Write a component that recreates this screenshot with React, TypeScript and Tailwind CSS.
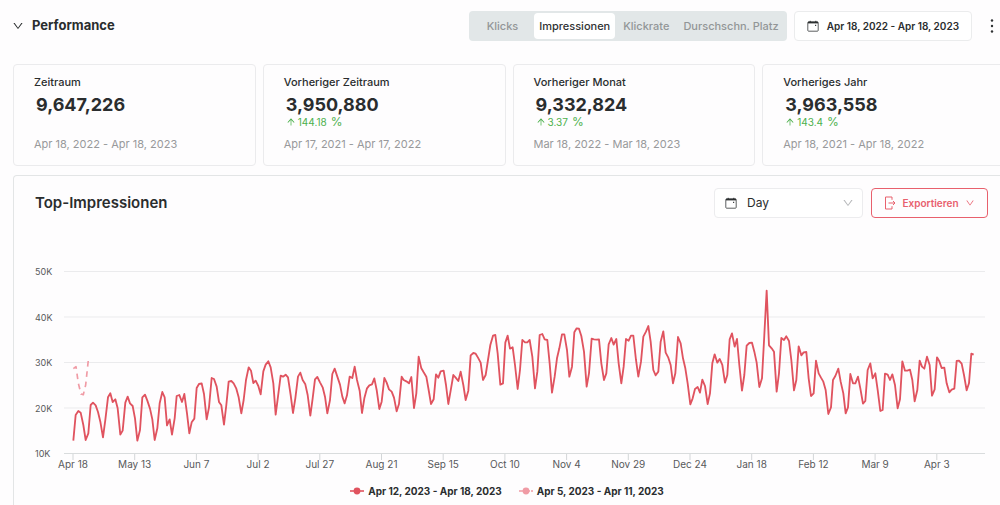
import { AiOutlineArrowUp, AiOutlineDown } from "react-icons/ai";

const TABS = ["Klicks", "Impressionen", "Klickrate", "Durschschn. Platz"];

const CARDS = [
  { title: "Zeitraum", value: "9,647,226", change: null, range: "Apr 18, 2022 - Apr 18, 2023" },
  { title: "Vorheriger Zeitraum", value: "3,950,880", change: "144.18", range: "Apr 17, 2021 - Apr 17, 2022" },
  { title: "Vorheriger Monat", value: "9,332,824", change: "3.37", range: "Mar 18, 2022 - Mar 18, 2023" },
  { title: "Vorheriges Jahr", value: "3,963,558", change: "143.4", range: "Apr 18, 2021 - Apr 18, 2022" },
];

const Y_TICKS = ["50K", "40K", "30K", "20K", "10K"];
const X_TICKS = [
  "Apr 18", "May 13", "Jun 7", "Jul 2", "Jul 27", "Aug 21", "Sep 15", "Oct 10",
  "Nov 4", "Nov 29", "Dec 24", "Jan 18", "Feb 12", "Mar 9", "Apr 3",
];

// Series points in thirds of a chart unit.
const CURRENT =
  "220,1322 227,1245 235,1233 242,1238 250,1275 257,1320 265,1300 272,1215 279,1208 287,1216 294,1236 301,1265 309,1312 316,1260 324,1192 331,1180 338,1206 346,1198 353,1225 361,1304 368,1292 376,1208 383,1190 390,1210 398,1218 405,1255 412,1322 420,1290 427,1192 435,1184 442,1202 450,1226 457,1258 464,1320 472,1285 479,1210 487,1176 494,1192 501,1276 509,1258 516,1304 524,1255 530,1188 538,1185 546,1206 553,1182 561,1240 568,1300 575,1267 583,1256 590,1164 597,1152 605,1150 612,1182 620,1258 627,1222 635,1134 642,1137 650,1160 657,1206 664,1216 672,1274 679,1215 686,1145 694,1143 701,1150 709,1166 716,1192 724,1240 731,1200 738,1140 746,1102 753,1112 760,1149 767,1142 775,1158 782,1183 790,1114 797,1094 805,1084 812,1102 820,1150 827,1244 834,1190 842,1127 849,1130 857,1124 864,1132 872,1185 879,1239 886,1195 894,1130 901,1118 908,1140 916,1153 923,1185 931,1247 938,1195 945,1138 952,1131 960,1147 968,1162 975,1190 982,1240 990,1200 997,1122 1004,1106 1012,1130 1020,1154 1027,1190 1034,1210 1041,1186 1049,1130 1057,1134 1064,1100 1071,1140 1079,1172 1086,1239 1093,1195 1101,1165 1108,1156 1116,1153 1123,1135 1130,1170 1138,1227 1145,1205 1153,1134 1160,1148 1167,1168 1175,1175 1182,1193 1190,1234 1197,1212 1205,1130 1211,1140 1219,1144 1227,1150 1234,1131 1242,1224 1249,1180 1256,1070 1264,1105 1271,1117 1279,1130 1286,1170 1293,1212 1301,1198 1308,1123 1315,1133 1322,1114 1331,1112 1338,1155 1345,1212 1352,1172 1360,1125 1367,1133 1375,1143 1382,1115 1390,1155 1397,1200 1405,1172 1412,1066 1420,1059 1427,1061 1434,1073 1442,1088 1449,1140 1457,1125 1464,1080 1471,1035 1479,1007 1486,1005 1493,1060 1501,1154 1509,1150 1516,1028 1523,1007 1530,1046 1538,1042 1545,1095 1553,1167 1560,1110 1567,1020 1575,1027 1582,1027 1589,1020 1597,1070 1605,1165 1612,1115 1619,1005 1627,1002 1634,1018 1642,1020 1649,1090 1656,1178 1664,1130 1671,1075 1678,1045 1686,1003 1693,1003 1701,1050 1708,1130 1716,1100 1723,997 1730,985 1737,986 1744,1008 1752,1055 1760,1160 1767,1120 1775,1016 1782,1018 1790,1019 1797,1018 1804,1090 1812,1140 1819,1120 1826,1033 1834,1014 1841,1034 1849,1017 1856,1090 1864,1150 1871,1100 1878,1017 1886,1022 1893,1007 1900,1007 1908,1080 1915,1130 1923,1085 1930,1010 1938,995 1945,978 1952,1025 1960,1110 1967,1126 1975,1115 1982,1025 1990,994 1997,1058 2005,1073 2012,1095 2019,1150 2026,1120 2034,1011 2042,1030 2049,1075 2056,1105 2063,1150 2071,1213 2078,1195 2085,1167 2093,1161 2100,1178 2107,1139 2115,1158 2123,1212 2130,1180 2137,1090 2144,1063 2152,1088 2159,1077 2167,1095 2175,1148 2182,1125 2189,1018 2196,1000 2204,1040 2211,1017 2218,1095 2226,1172 2233,1125 2240,1037 2248,1029 2256,1028 2263,1055 2270,1088 2278,1161 2286,1135 2293,1005 2300,872 2307,1036 2315,1045 2322,1055 2330,1175 2337,1120 2344,1014 2352,1020 2359,1009 2367,1023 2374,1080 2382,1171 2389,1140 2396,1039 2404,1066 2411,1057 2419,1056 2426,1135 2433,1188 2441,1180 2448,1082 2456,1120 2463,1133 2470,1145 2477,1170 2485,1242 2493,1222 2499,1140 2506,1128 2515,1106 2522,1145 2530,1180 2537,1240 2544,1222 2551,1122 2559,1150 2566,1150 2574,1130 2581,1165 2589,1211 2596,1203 2603,1110 2611,1090 2618,1135 2626,1120 2633,1170 2641,1233 2648,1230 2655,1121 2663,1124 2670,1140 2677,1123 2685,1155 2693,1225 2700,1198 2707,1084 2715,1112 2722,1112 2730,1109 2737,1140 2744,1204 2752,1170 2759,1082 2766,1100 2773,1106 2781,1070 2789,1095 2796,1187 2804,1168 2811,1072 2818,1084 2825,1104 2833,1103 2840,1150 2848,1177 2855,1169 2863,1166 2870,1083 2877,1082 2885,1091 2892,1125 2900,1171 2907,1150 2914,1061 2921,1064";
const PREVIOUS = "220,1106 228,1100 235,1150 243,1182 250,1184 257,1155 265,1080";

function CalendarIcon() {
  return (
    <svg className="h-3 w-3 shrink-0" viewBox="0 0 12 12" fill="none" aria-hidden="true">
      <rect x="0.8" y="1.8" width="10.4" height="9.4" rx="0.8" stroke="#4a4d4e" strokeWidth="0.9" />
      <path d="M1 2.6H11" stroke="#2b2e2f" strokeWidth="1.6" />
      <path d="M3.2 0.8V2M8.8 0.8V2" stroke="#2b2e2f" />
      <path d="M8 5.4H9.2" stroke="#3f4243" strokeWidth="1.2" />
    </svg>
  );
}

function ExportIcon() {
  return (
    <svg className="h-3.5 w-3 shrink-0" viewBox="0 0 12 14" fill="none" stroke="#e8606d" aria-hidden="true">
      <path d="M8 3.8V1H1.5V13H8V10.2" />
      <path d="M4.5 7H11M9 5L11 7L9 9" />
    </svg>
  );
}

function Chart() {
  return (
    <svg className="block h-auto w-full" viewBox="32 262 956 212" role="img" aria-label="Top-Impressionen">
      {Y_TICKS.map((label, i) => (
        <g key={label}>
          <line
            x1="64"
            x2="985"
            y1={271.5 + i * 45.5}
            y2={271.5 + i * 45.5}
            stroke={i === 4 ? "#d9dcdd" : "#ebebed"}
          />
          <text x="35" y={275 + i * 45.5} fontSize="9" fill="#58595b">
            {label}
          </text>
        </g>
      ))}
      {X_TICKS.map((label, i) => (
        <g key={label}>
          <line x1={73 + i * 61.7} x2={73 + i * 61.7} y1="454" y2="460" stroke="#d3d6d8" />
          <text x={73 + i * 61.7} y="468" fontSize="10" fill="#58595b" textAnchor="middle">
            {label}
          </text>
        </g>
      ))}
      <g transform="scale(0.33333)" fill="none" strokeLinejoin="round">
        <polyline points={PREVIOUS} stroke="#f09ba5" strokeWidth="5" strokeDasharray="17 14" />
        <polyline points={CURRENT} stroke="#e0535f" strokeWidth="5.5" />
      </g>
    </svg>
  );
}

export default function App() {
  return (
    <main className="min-h-screen overflow-hidden bg-[#fefdfe] font-['Inter',sans-serif] text-[#2a2d2e]">
      <header className="flex items-center pt-[11px] pl-3">
        <button type="button" className="flex items-center gap-2">
          <AiOutlineDown className="h-3 w-3" />
          <h1 className="text-[13px] font-bold">Performance</h1>
        </button>
        <div className="ml-auto flex h-[30px] items-center rounded bg-[#e2e7e8] p-0.5 text-[11px] font-medium text-[#929697]">
          {TABS.map((tab) =>
            tab === "Impressionen" ? (
              <button key={tab} type="button" aria-pressed="true" className="h-full rounded bg-white px-[5px] text-[#2f3233]">
                {tab}
              </button>
            ) : (
              <button key={tab} type="button" aria-pressed="false" className="px-1.5 first:px-4 nth-3:px-2">
                {tab}
              </button>
            ),
          )}
        </div>
        <button
          type="button"
          className="ml-[7px] flex h-[30px] items-center gap-2 rounded border border-[#ebeced] bg-white px-3 text-[10px] font-semibold"
        >
          <CalendarIcon />
          Apr 18, 2022 - Apr 18, 2023
        </button>
        <button type="button" aria-label="Mehr" className="ml-3 flex w-4 justify-center">
          <svg className="h-4 w-1" viewBox="0 0 4 16" fill="#2f3233" aria-hidden="true">
            <circle cx="2" cy="2.5" r="1.2" />
            <circle cx="2" cy="8" r="1.2" />
            <circle cx="2" cy="13.5" r="1.2" />
          </svg>
        </button>
      </header>

      <div className="-mr-[5px] pt-[23px] pl-[13px]">
        <div className="grid grid-cols-4 gap-[7px]">
          {CARDS.map((card) => (
            <section key={card.title} className="flex h-[102px] flex-col rounded border border-[#ebebed] px-5 pt-[9px]">
              <h2 className="text-[11px] leading-4 font-medium">{card.title}</h2>
              <p className="mt-1 pl-0.5 text-lg leading-[22px] font-bold">{card.value}</p>
              <div className="flex h-3 items-center pl-0.5 text-[#4cb04c]">
                {card.change && (
                  <>
                    <AiOutlineArrowUp className="h-2.5 w-2.5" />
                    <span className="ml-0.5 text-[10px]">{card.change}</span>
                    <span className="ml-1 text-xs">%</span>
                  </>
                )}
              </div>
              <p className="mt-2 text-[11px] leading-4 text-[#98999b]">{card.range}</p>
            </section>
          ))}
        </div>

        <section className="mt-[9px] rounded-tl border border-b-0 border-[#e3e5e6] pt-3 pb-4">
          <div className="flex items-center gap-2 pr-4 pl-[21px]">
            <h2 className="mr-auto text-[15px] font-semibold">Top-Impressionen</h2>
            <div className="relative flex h-[30px] w-[149px] items-center rounded-sm border border-[#ececee] bg-white">
              <span className="pointer-events-none absolute left-2.5">
                <CalendarIcon />
              </span>
              <select aria-label="Intervall" className="h-full w-full appearance-none bg-transparent pl-8 text-xs">
                <option>Day</option>
              </select>
              <AiOutlineDown className="pointer-events-none absolute right-2 h-3 w-3 text-[#b5b7b9]" />
            </div>
            <button
              type="button"
              className="flex h-[30px] w-[117px] items-center justify-center gap-1.5 rounded border border-[#e8606d] text-[10px] font-semibold text-[#e8606d]"
            >
              <ExportIcon />
              Exportieren
              <AiOutlineDown className="h-2.5 w-2.5" />
            </button>
          </div>
          <div className="mt-[44px] pr-4 pl-[18px]">
            <Chart />
          </div>
          <ul className="mt-[9px] flex justify-center gap-[17px] pr-1 text-[10px] leading-4 font-bold">
            <li className="flex items-center gap-1">
              <svg className="h-2 w-3.5" viewBox="0 0 14 8" aria-hidden="true">
                <path d="M0 4H14" stroke="#e0535f" strokeWidth="1.6" />
                <circle cx="7" cy="4" r="3.4" fill="#e0535f" />
              </svg>
              Apr 12, 2023 - Apr 18, 2023
            </li>
            <li className="flex items-center gap-1">
              <svg className="h-2 w-3.5" viewBox="0 0 14 8" aria-hidden="true">
                <path d="M0 4H14" stroke="#f09ba5" strokeWidth="1.4" strokeDasharray="11 1" />
                <circle cx="7" cy="4" r="3.4" fill="#f09ba5" />
              </svg>
              Apr 5, 2023 - Apr 11, 2023
            </li>
          </ul>
        </section>
      </div>
    </main>
  );
}
